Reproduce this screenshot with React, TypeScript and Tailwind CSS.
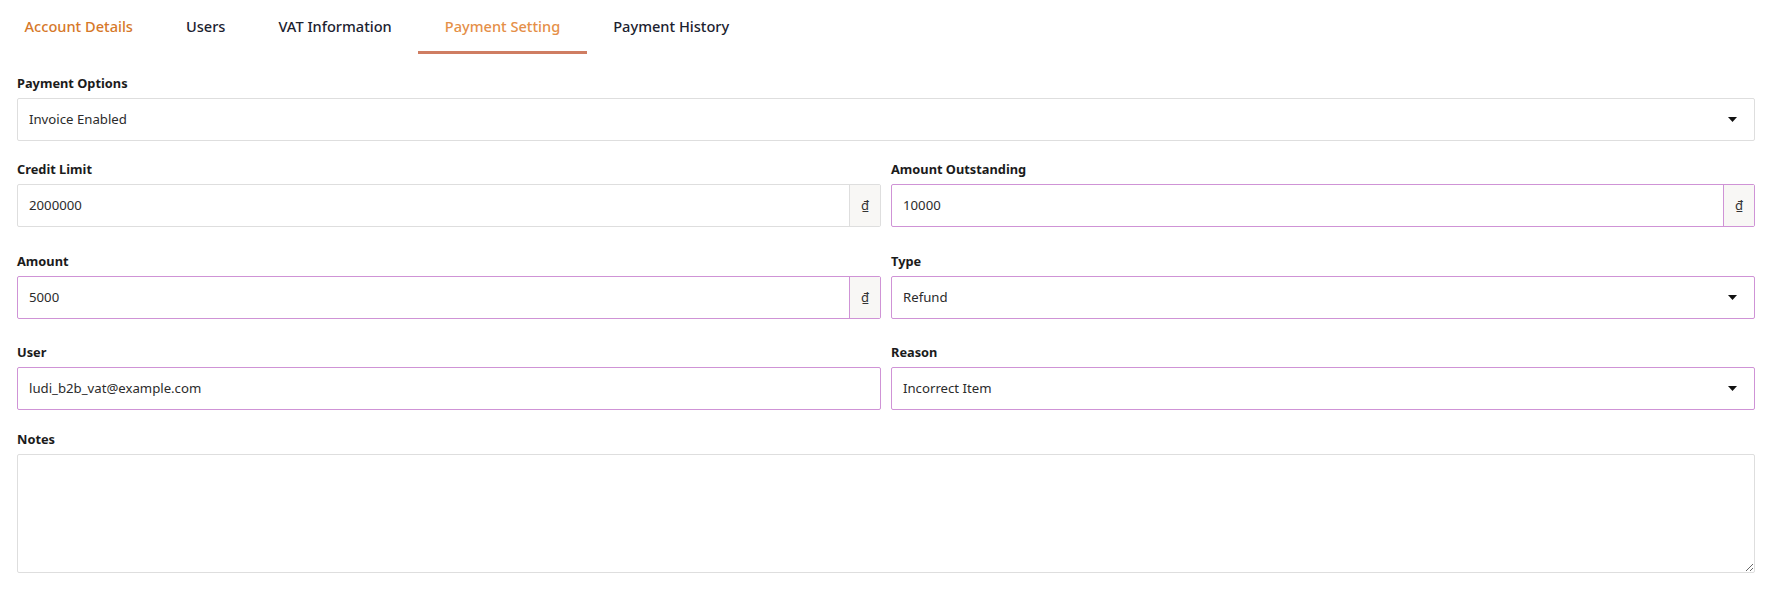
import { useState } from 'react';

const tabs = ['Account Details', 'Users', 'VAT Information', 'Payment Setting', 'Payment History'];

function Caret() {
  return (
    <svg width="9" height="5" viewBox="0 0 9 5" className="shrink-0">
      <path d="M0 0h9L4.5 5z" fill="#111" />
    </svg>
  );
}

function Label({ children }: { children: React.ReactNode }) {
  return <div className="h-5 leading-5 text-[12.8px] font-bold text-[#1b1b1b] mb-[5px]">{children}</div>;
}

function TextBox({ value, purple, addon }: { value: string; purple?: boolean; addon?: boolean }) {
  const border = purple ? 'border-[#cf93d6]' : 'border-[#dedede]';
  return (
    <div className={`flex h-[43px] border rounded-[2px] bg-white ${border}`}>
      <input
        readOnly
        defaultValue={value}
        className="flex-1 min-w-0 px-[11px] text-[13.2px] text-[#2b2b2b] bg-transparent outline-none"
      />
      {addon && (
        <div className={`w-[31px] flex items-center justify-center border-l bg-[#f8f7f5] text-[13px] text-[#333] ${border}`}>
          ₫
        </div>
      )}
    </div>
  );
}

function SelectBox({ value, purple }: { value: string; purple?: boolean }) {
  return (
    <div
      className={`flex items-center justify-between h-[43px] pl-[11px] pr-[17px] border rounded-[2px] bg-white text-[13.2px] text-[#2b2b2b] ${
        purple ? 'border-[#cf93d6]' : 'border-[#dedede]'
      }`}
    >
      <span>{value}</span>
      <Caret />
    </div>
  );
}

export default function App() {
  const [active, setActive] = useState(3);

  return (
    <div className="w-[1772px] h-[596px] bg-white font-['Noto_Sans',sans-serif]">
      {/* tabs */}
      <div className="flex h-[54px] ml-[-2px]">
        {tabs.map((t, i) => (
          <button
            key={t}
            onClick={() => setActive(i)}
            className={`relative px-[26.5px] pb-[2px] text-[14.6px] font-medium leading-5 ${
              i === active ? 'text-[#e58f48]' : i === 0 ? 'text-[#d6782a]' : 'text-[#1c2230]'
            }`}
          >
            {t}
            {i === active && <span className="absolute left-0 right-0 bottom-0 h-[3px] bg-[#cf7d62]" />}
          </button>
        ))}
      </div>

      <div className="px-[17px]">
        <div className="mt-[19px]">
          <Label>Payment Options</Label>
          <SelectBox value="Invoice Enabled" />
        </div>

        <div className="grid grid-cols-2 gap-x-[10px] mt-[18px]">
          <div>
            <Label>Credit Limit</Label>
            <TextBox value="2000000" addon />
          </div>
          <div>
            <Label>Amount Outstanding</Label>
            <TextBox value="10000" addon purple />
          </div>
        </div>

        <div className="grid grid-cols-2 gap-x-[10px] mt-[24px]">
          <div>
            <Label>Amount</Label>
            <TextBox value="5000" addon purple />
          </div>
          <div>
            <Label>Type</Label>
            <SelectBox value="Refund" purple />
          </div>
        </div>

        <div className="grid grid-cols-2 gap-x-[10px] mt-[23px]">
          <div>
            <Label>User</Label>
            <TextBox value="ludi_b2b_vat@example.com" purple />
          </div>
          <div>
            <Label>Reason</Label>
            <SelectBox value="Incorrect Item" purple />
          </div>
        </div>

        <div className="mt-[19px]">
          <Label>Notes</Label>
          <textarea className="block w-full h-[119px] border border-[#dedede] rounded-[2px] outline-none px-[11px] py-2 text-[13px]" />
        </div>
      </div>
    </div>
  );
}
